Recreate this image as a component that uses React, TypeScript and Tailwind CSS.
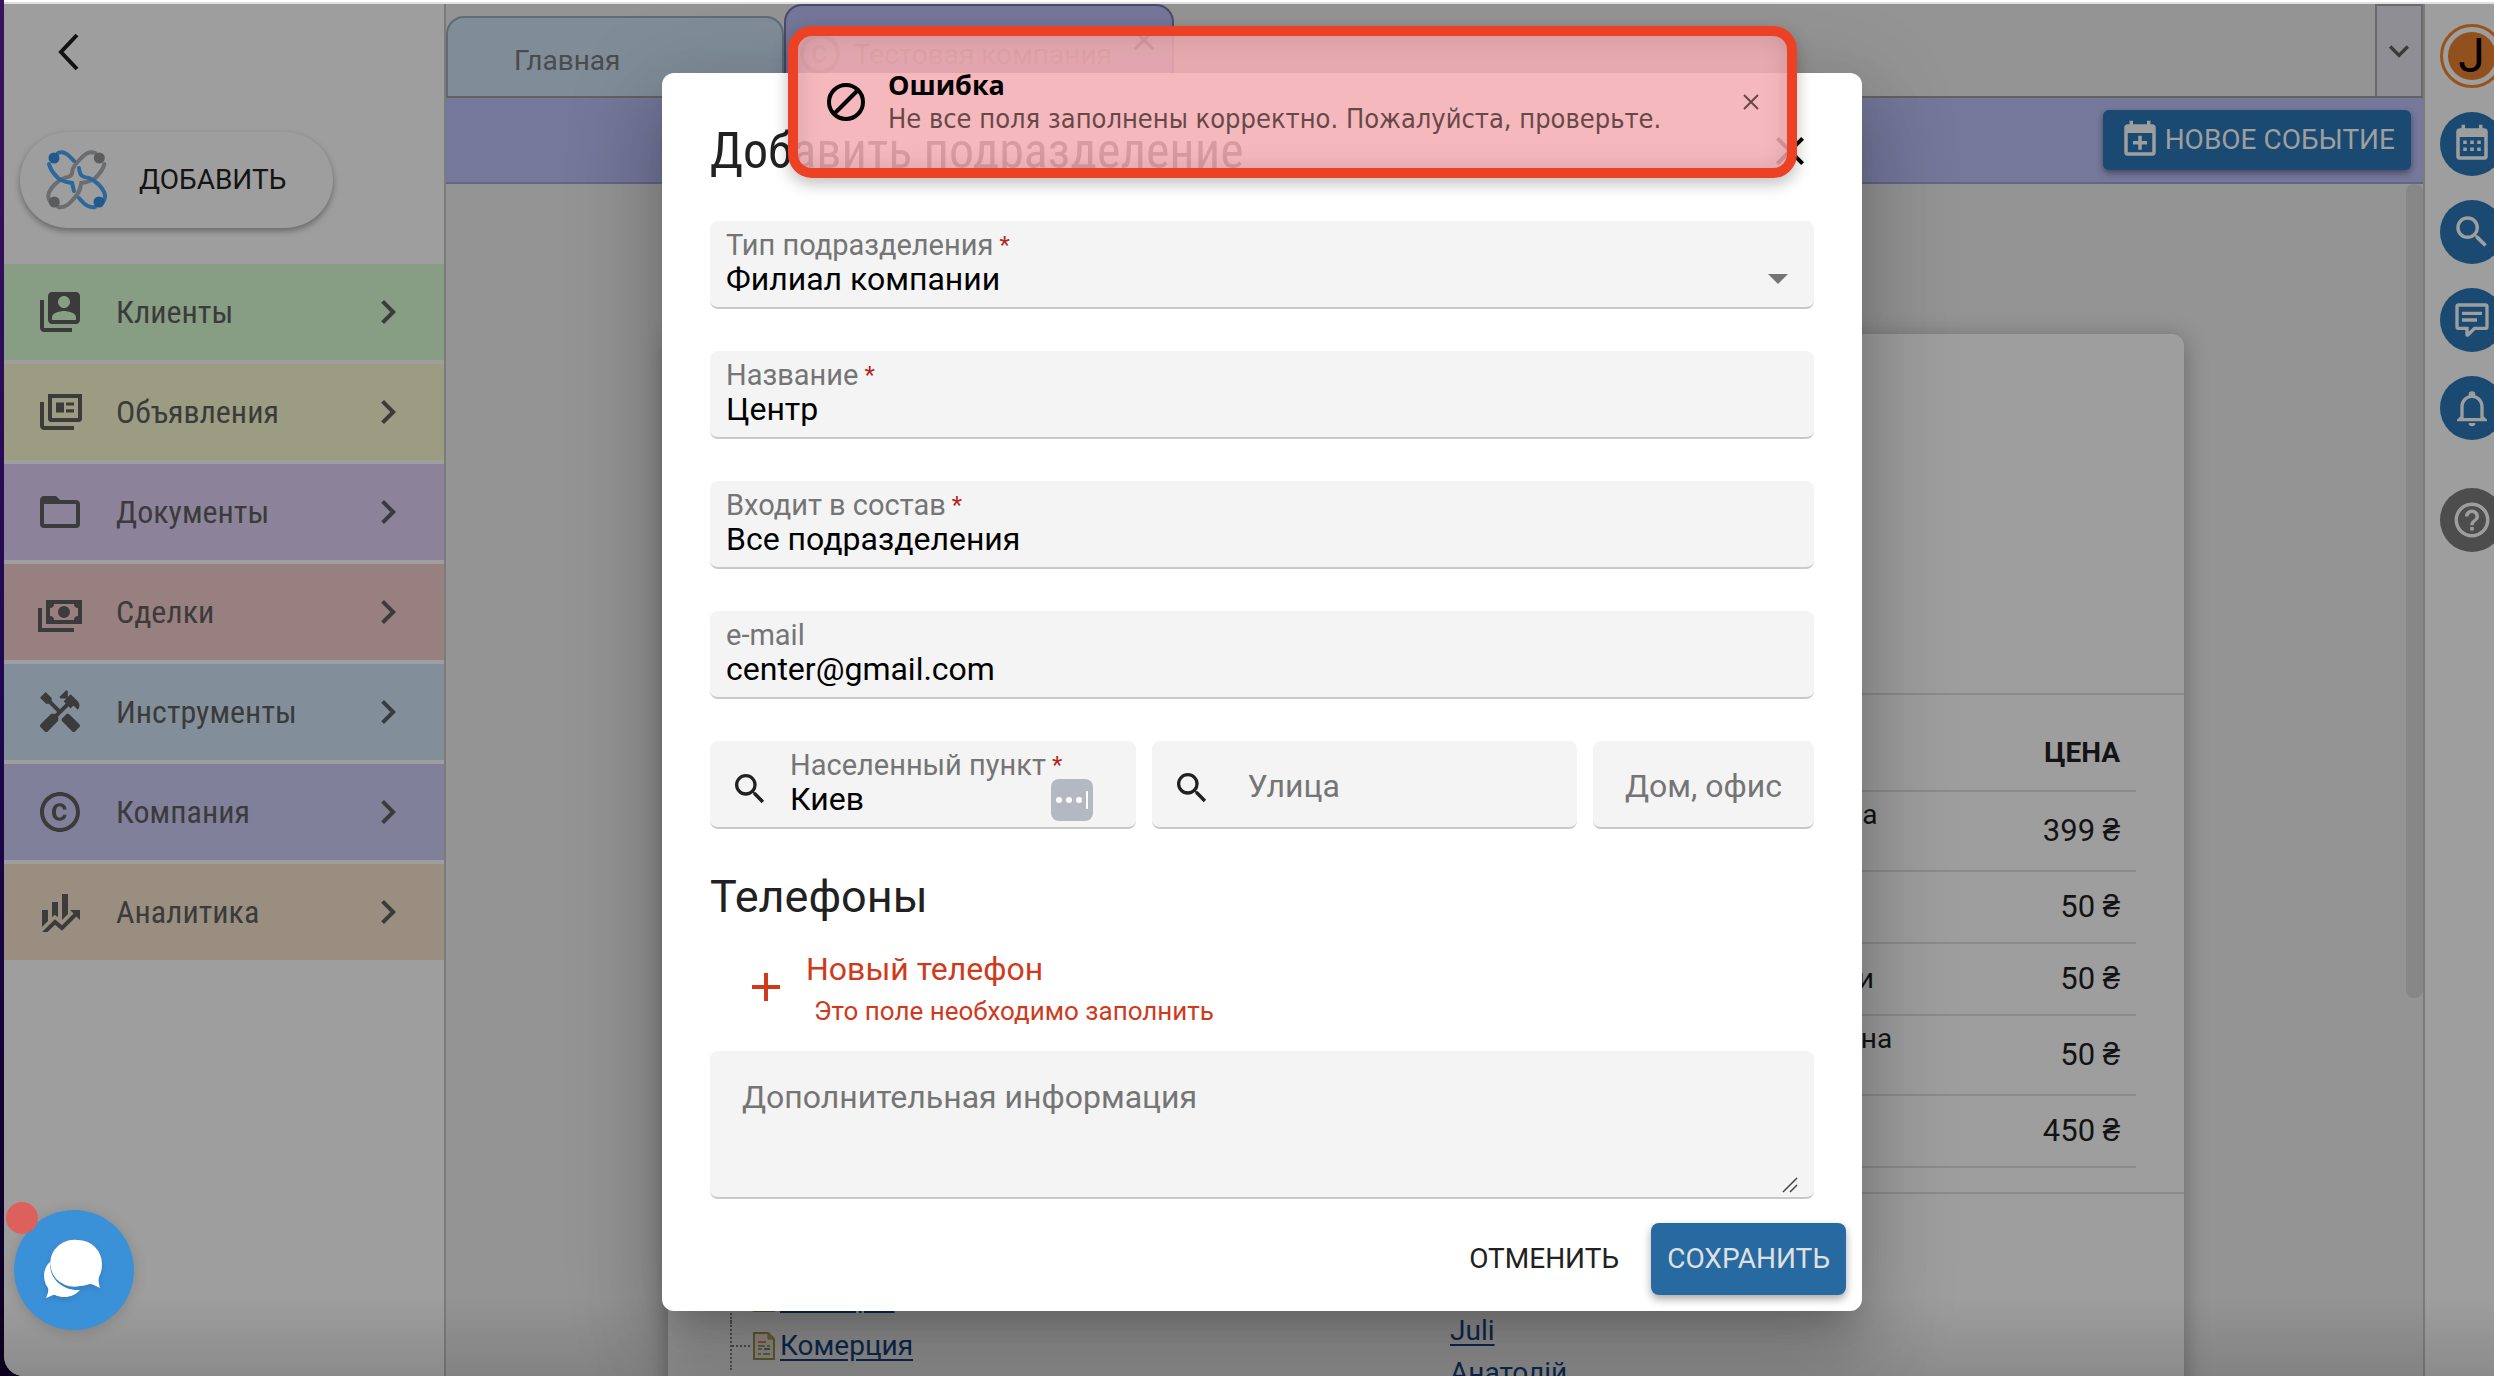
import { useState } from "react";
import {
  MdAdd,
  MdChevronRight,
  MdClose,
  MdCopyright,
  MdExpandMore,
  MdHandyman,
  MdHelpOutline,
  MdSearch,
  MdSwitchAccount,
} from "react-icons/md";

const paths = {
  news: "M4 7v12h15v2H4c-1.1 0-2-.9-2-2V7h2zM6 3h17v12.500c0 .8-.7 1.500-1.500 1.500H7.500C6.700 17 6 16.300 6 15.500V3zm2 2v10h13V5H8zm2 2.200h4v5h-4v-5zm5 0h4v1.600h-4V7.200zm0 3.400h4v1.600h-4v-1.600z",
  folder:
    "M20 18H4V8h16m0-2h-8l-2-2H4c-1.110 0-2 .89-2 2v12a2 2 0 0 0 2 2h16a2 2 0 0 0 2-2V8c0-1.110-.9-2-2-2z",
  cash: "M5 6h18v12H5V6m9 3a3 3 0 0 1 3 3 3 3 0 0 1-3 3 3 3 0 0 1-3-3 3 3 0 0 1 3-3M9 8a2 2 0 0 1-2 2v4a2 2 0 0 1 2 2h10a2 2 0 0 1 2-2v-4a2 2 0 0 1-2-2H9m-8 2h2v10h16v2H1V10z",
  finance:
    "M6 16.500l-3 2.940V11h3m5 3.660l-1.570-1.340L8 14.640V7h3m5 6l-3 3V3h3m2.810 9.810L17 11h5v5l-1.790-1.790L13 21.360l-3.470-3.020L5.750 22H3l6.470-6.340L13 18.640",
  calendar:
    "M9 10v2H7v-2h2m4 0v2h-2v-2h2m4 0v2h-2v-2h2m2-7a2 2 0 0 1 2 2v14a2 2 0 0 1-2 2H5a2 2 0 0 1-2-2V5a2 2 0 0 1 2-2h1V1h2v2h8V1h2v2h1m0 16V8H5v11h14M9 14v2H7v-2h2m4 0v2h-2v-2h2m4 0v2h-2v-2h2z",
  calendarPlus:
    "M19 19V8H5v11h14M16 1h2v2h1a2 2 0 0 1 2 2v14a2 2 0 0 1-2 2H5a2 2 0 0 1-2-2V5a2 2 0 0 1 2-2h1V1h2v2h8V1m-5 8.500h2v3h3v2h-3v3h-2v-3H8v-2h3v-3z",
  comment:
    "M9 22a1 1 0 0 1-1-1v-3H4a2 2 0 0 1-2-2V4a2 2 0 0 1 2-2h16a2 2 0 0 1 2 2v12a2 2 0 0 1-2 2h-6.100l-3.700 3.710c-.2.19-.45.29-.7.29H9m1-6v3.080L13.080 16H20V4H4v12h6M6 7h12v2H6V7m0 4h9v2H6v-2z",
  bell: "M10 21h4a2 2 0 0 1-4 0m11-2v1H3v-1l2-2v-6c0-3.100 2.030-5.830 5-6.710V4a2 2 0 0 1 4 0v.29c2.970.88 5 3.610 5 6.710v6l2 2m-4-8a5 5 0 0 0-10 0v7h10v-7z",
};

const Icon = ({ d, className = "" }: { d: string; className?: string }) => (
  <svg viewBox="0 0 24 24" fill="currentColor" fillRule="evenodd" className={className}>
    <path d={d} />
  </svg>
);

const menu = [
  { title: "Клиенты", bg: "bg-[#879d84]", icon: <MdSwitchAccount className="size-12" /> },
  { title: "Объявления", bg: "bg-[#9c9c82]", icon: <Icon d={paths.news} className="size-12" /> },
  { title: "Документы", bg: "bg-[#8c8299]", icon: <Icon d={paths.folder} className="size-12" /> },
  { title: "Сделки", bg: "bg-[#998080]", icon: <Icon d={paths.cash} className="size-12" /> },
  { title: "Инструменты", bg: "bg-[#828f9b]", icon: <MdHandyman className="size-12" /> },
  { title: "Компания", bg: "bg-[#80809b]", icon: <MdCopyright className="size-12" /> },
  { title: "Аналитика", bg: "bg-[#9a8e80]", icon: <Icon d={paths.finance} className="size-12" /> },
];

const prices = [
  { name: "ла", price: "399 ₴", wrap: true },
  { name: "", price: "50 ₴", wrap: false },
  { name: "ги", price: "50 ₴", wrap: false },
  { name: "ена", price: "50 ₴", wrap: true },
  { name: "", price: "450 ₴", wrap: false },
];

const Logo = () => (
  <svg viewBox="0 0 61 60" className="w-[61px] h-[60px]" fill="none" strokeWidth="4" strokeLinecap="round">
    <g transform="translate(61.300 0) scale(-1 1)" stroke="#6b6d70">
      <path d="M12 3C17 1 21 3 25 7C30 12 34 15 35 21C35 26 38 27 43 28C50 31 56 37 58 42C60 46 59 49 57 52" />
      <path d="M3 14C4 19 7 23 12 28C17 32 21 32 26 33C27 39 28 43 33 48C38 54 42 58 49 57" />
      <circle cx="8" cy="8" r="5.500" fill="#5a5c5e" stroke="none" />
      <circle cx="53" cy="52" r="5.500" fill="#5a5c5e" stroke="none" />
    </g>
    <g stroke="#2c689a">
      <path d="M12 3C17 1 21 3 28 11M33 18C34 26 36 27 43 28C50 31 56 37 58 42C60 46 59 49 57 52" />
      <path d="M3 14C4 19 7 23 12 28C17 32 21 32 26 33C27 36 27 38 28 41M33 48C38 54 42 58 49 57" />
      <circle cx="8" cy="8" r="5.500" fill="#20598b" stroke="none" />
      <circle cx="53" cy="52" r="5.500" fill="#20598b" stroke="none" />
    </g>
  </svg>
);

const Sidebar = () => (
  <aside className="flex flex-col w-[442px] shrink-0 border-r-2 border-[#7b7b7b] bg-[#9e9e9e]">
    <button aria-label="Назад" className="mt-6 ml-10 size-14">
      <svg viewBox="0 0 56 56" fill="none" stroke="#111" strokeWidth="4" className="size-14">
        <path d="M33 7L17 24L33 41" />
      </svg>
    </button>
    <button className="mt-12 ml-4 w-[313px] h-24 shrink-0 rounded-full bg-[#9e9e9e] shadow-[0_3px_6px_rgba(0,0,0,0.35)] flex items-center pl-[26px] gap-8 text-[28px] text-[#141414]">
      <Logo />
      ДОБАВИТЬ
    </button>
    <nav className="mt-9 flex flex-col gap-1">
      {menu.map((item) => (
        <a
          key={item.title}
          href="#"
          className={`flex items-center h-24 px-8 text-[32px] text-[#3b3b3b] font-['Roboto_Condensed',Roboto,sans-serif] ${item.bg}`}
        >
          {item.icon}
          <span className="ml-8 flex-1">{item.title}</span>
          <MdChevronRight className="size-12" />
        </a>
      ))}
    </nav>
  </aside>
);

const Tabs = () => (
  <div className="flex items-end h-[94px] shrink-0 border-b-2 border-[#62635f] bg-[#949494]">
    <a
      href="#"
      className="flex items-center w-[338px] h-20 pl-[66px] pt-2 rounded-t-[18px] border-2 border-b-0 border-[#5f6c76] bg-[#808d99] text-[28px] text-[#4b4b4b]"
    >
      Главная
    </a>
    <a
      href="#"
      className="flex items-start w-[390px] h-[92px] pl-2.5 pr-2.5 pt-6 rounded-t-[18px] border-2 border-b-0 border-[#4a4b66] bg-[#75779b] text-[28px] text-[#4b4b4b]"
    >
      <MdCopyright className="size-12" />
      <span className="mt-1 ml-2.5 flex-1">Тестовая компания</span>
      <MdClose className="size-9 -mt-2 text-black" />
    </a>
    <button
      aria-label="Все вкладки"
      className="ml-auto flex items-center justify-center w-12 h-[92px] border-2 border-b-0 border-[#6a6a6a] bg-[#8f8e94] text-[#3b3b3b]"
    >
      <MdExpandMore className="size-10" />
    </button>
  </div>
);

const TreeItem = ({ title }: { title: string }) => (
  <li className="flex items-center h-12 border-l-2 border-dotted border-[#555] text-[#0e2d57]">
    <span className="w-[18px] mr-0.5 border-t-2 border-dotted border-[#555]"></span>
    <svg viewBox="0 0 24 30" className="w-6 h-[30px] mr-1">
      <path d="M2 2h14l6 6v20H2z" fill="#9a9789" stroke="#6d5f35" strokeWidth="2" />
      <path d="M16 2v6h6" fill="#7c6c3c" stroke="#6d5f35" strokeWidth="1" />
      <path d="M6 11h8M6 18h4" stroke="#9a5055" strokeWidth="2" />
      <path d="M6 15h7M15 15h3M6 23h3M11 23h7" stroke="#52705f" strokeWidth="2" />
      <path d="M12 18h6" stroke="#555" strokeWidth="2" />
    </svg>
    <a href="#" className="underline underline-offset-4">
      {title}
    </a>
  </li>
);

const Content = () => (
  <div className="flex flex-1 min-h-0 overflow-hidden">
    <div className="flex-1 flex justify-center">
      <div className="w-[1516px] mt-[150px] min-h-[1100px] rounded-xl bg-[#9e9e9e] shadow-[0_4px_24px_rgba(0,0,0,0.3)] text-[#141414]">
        <div className="h-[361px] border-b-2 border-[#8b8b8b]"></div>
        <div className="px-12 pb-6 border-b-2 border-[#8b8b8b]">
          <table className="w-full">
            <thead>
              <tr className="h-24 border-b-2 border-[#8b8b8b] text-[28px]">
                <th></th>
                <th className="w-[286px] pt-5 pr-4 text-right font-bold">ЦЕНА</th>
              </tr>
            </thead>
            <tbody className="text-[31px] leading-8">
              {prices.map((row, i) => (
                <tr key={i} className={`border-b-2 border-[#8b8b8b] ${row.wrap ? "h-20" : "h-[72px]"}`}>
                  <td className="pl-[1130px] text-[28px]">
                    {row.name}
                    {row.wrap && <br />}
                    {row.wrap && <span>&nbsp;</span>}
                  </td>
                  <td className="pr-4 text-right">{row.price}</td>
                </tr>
              ))}
            </tbody>
          </table>
        </div>
        <div className="grid grid-cols-2 pt-8 text-[28px]">
          <ul className="pl-[62px]">
            <TreeItem title="Центр" />
            <TreeItem title="Секторы" />
            <TreeItem title="Комерция" />
          </ul>
          <ul className="pl-6 leading-[42px] text-[#0e2d57]">
            <li>&nbsp;</li>
            <li>&nbsp;</li>
            <li>
              <a href="#" className="underline underline-offset-4">
                Juli
              </a>
            </li>
            <li>
              <a href="#" className="underline underline-offset-4">
                Анатолій
              </a>
            </li>
          </ul>
        </div>
        <div className="ml-[62px] h-12 border-l-2 border-dotted border-[#555]"></div>
      </div>
    </div>
    <div className="w-[17px] shrink-0">
      <div className="h-[814px] rounded-lg bg-[#878787]"></div>
    </div>
  </div>
);

const RailButton = ({ label, children }: any) => (
  <button
    aria-label={label}
    className="flex items-center justify-center size-16 rounded-full bg-[#1a4971] text-[#9e9e9e]"
  >
    {children}
  </button>
);

const Rail = () => (
  <aside className="flex flex-col items-center gap-6 w-[97px] shrink-0 pt-5 pr-0.5 border-l-2 border-[#7b7b7b] bg-[#9e9e9e]">
    <button className="flex size-16 rounded-full border-[3px] border-[#96531d] p-[5px]">
      <span className="flex items-center justify-center size-full rounded-full bg-[#92511c] text-5xl text-black">
        J
      </span>
    </button>
    <RailButton label="Календарь">
      <Icon d={paths.calendar} className="size-[42px]" />
    </RailButton>
    <RailButton label="Поиск">
      <MdSearch className="size-[42px]" />
    </RailButton>
    <RailButton label="Сообщения">
      <Icon d={paths.comment} className="size-10" />
    </RailButton>
    <RailButton label="Уведомления">
      <Icon d={paths.bell} className="size-10" />
    </RailButton>
    <button
      aria-label="Помощь"
      className="mt-6 flex items-center justify-center size-16 rounded-full bg-[#4d4d4d] text-[#9e9e9e]"
    >
      <MdHelpOutline className="size-[42px]" />
    </button>
  </aside>
);

const box = "rounded-lg border-b-2 border-[#c9c9c9] bg-[#f4f4f4]";

const Label = ({ id, text, required }: any) => (
  <label htmlFor={id} className="flex h-8 text-[29px] leading-8 text-[#757575] whitespace-nowrap">
    {text}
    {required && <span className="ml-1.5 text-2xl leading-8 text-[#b3261e]">*</span>}
  </label>
);

const Field = ({ id, text, value, required }: any) => (
  <div className={`h-[88px] px-4 pt-2 ${box}`}>
    <Label id={id} text={text} required={required} />
    <input id={id} defaultValue={value} className="block w-full h-9 text-[32px] leading-9 outline-none" />
  </div>
);

const Dialog = ({ onClose }: any) => (
  <div
    role="dialog"
    className="w-full max-w-[1200px] flex flex-col pt-[50px] rounded-xl bg-white text-[#212121] shadow-[0_22px_30px_-14px_rgba(0,0,0,0.2),0_48px_76px_6px_rgba(0,0,0,0.14),0_18px_92px_16px_rgba(0,0,0,0.12)]"
  >
    <div className="px-12">
      <div className="flex items-center justify-between h-14 mb-[42px]">
        <h2 className="text-[50px] leading-14 font-['Roboto_Condensed',Roboto,sans-serif]">Добавить подразделение</h2>
        <button aria-label="Закрыть" onClick={onClose} className="text-black">
          <MdClose className="size-12" />
        </button>
      </div>
      <form className="flex flex-col gap-[42px] text-black">
        <div className={`relative h-[88px] px-4 pt-2 ${box}`}>
          <Label id="type" text="Тип подразделения" required />
          <select id="type" className="block w-full h-9 text-[32px] leading-9 appearance-none outline-none">
            <option>Филиал компании</option>
          </select>
          <svg viewBox="0 0 20 10" className="absolute right-[26px] top-[53px] w-5 h-2.5 pointer-events-none">
            <path d="M0 0h20L10 10z" fill="#757575" />
          </svg>
        </div>
        <Field id="name" text="Название" value="Центр" required />
        <Field id="parent" text="Входит в состав" value="Все подразделения" required />
        <Field id="email" text="e-mail" value="center@gmail.com" />
        <div className="flex gap-4">
          <div className={`relative flex flex-1 min-w-0 h-[88px] ${box}`}>
            <MdSearch className="size-10 mt-7 ml-5 mr-5 shrink-0 text-[#212121]" />
            <div className="flex-1 min-w-0 pt-2">
              <Label id="city" text="Населенный пункт" required />
              <input id="city" defaultValue="Киев" className="block w-40 h-9 text-[32px] leading-9 outline-none" />
            </div>
            <span className="absolute right-[43px] bottom-1.5 flex items-center justify-center gap-1 w-[42px] h-[42px] rounded-lg bg-[#b3b8c2]">
              <span className="size-1.5 rounded-full bg-white"></span>
              <span className="size-1.5 rounded-full bg-white"></span>
              <span className="size-1.5 rounded-full bg-white"></span>
              <span className="w-0.5 h-[18px] bg-white"></span>
            </span>
          </div>
          <div className={`flex items-center flex-1 min-w-0 h-[88px] ${box}`}>
            <MdSearch className="size-10 ml-5 mt-2 shrink-0 text-[#212121]" />
            <input
              aria-label="Улица"
              placeholder="Улица"
              className="flex-1 min-w-0 ml-9 mt-1 text-[32px] outline-none placeholder:text-[#757575]"
            />
          </div>
          <div className={`flex items-center w-[221px] h-[88px] px-8 ${box}`}>
            <input
              aria-label="Дом, офис"
              placeholder="Дом, офис"
              className="w-full mt-1 text-[32px] outline-none placeholder:text-[#757575]"
            />
          </div>
        </div>
      </form>
      <h3 className="mt-[42px] text-[45px] leading-[52px]">Телефоны</h3>
      <button className="mt-7 ml-8 flex items-start gap-4 text-left text-[#cf3a1c]">
        <MdAdd className="size-12 mt-3" />
        <span>
          <span className="block text-[32px] leading-9">Новый телефон</span>
          <span className="block pl-2 pt-1 text-[26px] leading-10">Это поле необходимо заполнить</span>
        </span>
      </button>
      <div className="relative mt-5">
        <textarea
          aria-label="Дополнительная информация"
          placeholder="Дополнительная информация"
          className={`block w-full h-[148px] px-8 py-6 text-[32px] leading-[44px] outline-none resize-none placeholder:text-[#757575] ${box}`}
        ></textarea>
        <svg viewBox="0 0 16 16" fill="none" stroke="#444" className="absolute right-4 bottom-1.5 size-4">
          <path d="M1 15L15 1M8 15L15 8" strokeWidth="1.500" />
        </svg>
      </div>
    </div>
    <div className="flex justify-end gap-4 pt-6 pb-4 px-4 text-[28px]">
      <button onClick={onClose} className="h-[72px] px-4">
        ОТМЕНИТЬ
      </button>
      <button className="h-[72px] px-4 rounded-lg bg-[#2769a1] text-[#e0e0e0] shadow-[0_4px_8px_rgba(0,0,0,0.35)]">
        СОХРАНИТЬ
      </button>
    </div>
  </div>
);

const Toast = () => (
  <div
    role="alert"
    className="absolute left-[788px] top-[26px] w-[1009px] h-[152px] flex items-center pl-7 pr-7 rounded-[24px] border-[10px] border-[#ec4125] bg-[rgba(243,173,179,0.87)] shadow-[0_6px_16px_rgba(0,0,0,0.25),inset_0_0_24px_rgba(0,0,0,0.12)]"
  >
    <svg viewBox="0 0 40 40" fill="none" stroke="#000" strokeWidth="4" className="size-10">
      <circle cx="20" cy="20" r="17" />
      <path d="M8 32L32 8" />
    </svg>
    <div className="flex-1 ml-[22px] text-[27px] leading-[34px]">
      <p className="font-bold text-black font-['Open_Sans','Noto_Sans',sans-serif]">Ошибка</p>
      <p className="text-[#674848] font-['DejaVu_Sans_Condensed','Open_Sans',sans-serif]">
        Не все поля заполнены корректно. Пожалуйста, проверьте.
      </p>
    </div>
    <button aria-label="Закрыть уведомление">
      <svg viewBox="0 0 16 16" fill="none" stroke="#674848" strokeWidth="2" className="size-4">
        <path d="M1 1L15 15M15 1L1 15" />
      </svg>
    </button>
  </div>
);

const Chat = () => (
  <button
    aria-label="Чат"
    className="absolute left-3.5 bottom-[46px] size-[120px] rounded-full bg-[#3b91d8] shadow-[0_2px_14px_rgba(0,0,0,0.15)]"
  >
    <svg viewBox="0 0 120 120" className="size-[120px] drop-shadow-md" fill="#fff">
      <path d="M64 30a24 23.500 0 1 0 2 46c5 0 8-2 11-2c4 1 6 3 9 4c-1-4-2-7-1-11c2-4 3-8 3-13a24 24 0 0 0-24-24z" />
      <path d="M36 52c-7 6-8 18-2 26c1 4-1 7-2 10c4-1 5-3 9-3c9 4 19 2 25-5c-17 1-31-11-30-28z" />
    </svg>
    <span className="absolute -left-2 -top-2 size-8 rounded-full bg-[#dc615c]"></span>
  </button>
);

export default function App() {
  const [open, setOpen] = useState(true);

  return (
    <div className="relative h-screen pl-1 overflow-hidden bg-linear-to-b from-[#3b1160] via-[#1f0850] to-[#0c0222] font-[Roboto,sans-serif]">
      <div className="flex flex-col h-full overflow-hidden rounded-bl-[20px] bg-[#9e9e9e]">
        <div className="h-1 shrink-0 border-b-2 border-[#e0e0e0] bg-white"></div>
        {/* the window runs a little past the right edge */}
        <div className="flex flex-1 min-h-0 w-[calc(100%+26px)]">
          <Sidebar />
          <div className="flex flex-col flex-1 min-w-0 bg-[#949494]">
            <Tabs />
            <div className="flex items-center justify-end h-[86px] shrink-0 px-3 border-b-2 border-[#64658a] bg-[#75779b]">
              <button className="flex items-center gap-1 h-[60px] pl-4 pr-4 rounded-md bg-[#1a4971] text-[28px] text-[#9e9e9e] shadow-[0_3px_6px_rgba(0,0,0,0.4)]">
                <Icon d={paths.calendarPlus} className="size-[42px]" />
                НОВОЕ СОБЫТИЕ
              </button>
            </div>
            <Content />
          </div>
          <Rail />
        </div>
      </div>
      <div className="absolute inset-x-0 bottom-0 h-20 bg-linear-to-b from-transparent to-black/12 pointer-events-none"></div>
      {open && (
        <div className="absolute top-[73px] left-1 w-[calc(100%+22px)] flex justify-center">
          <Dialog onClose={() => setOpen(false)} />
        </div>
      )}
      <Toast />
      <Chat />
    </div>
  );
}
